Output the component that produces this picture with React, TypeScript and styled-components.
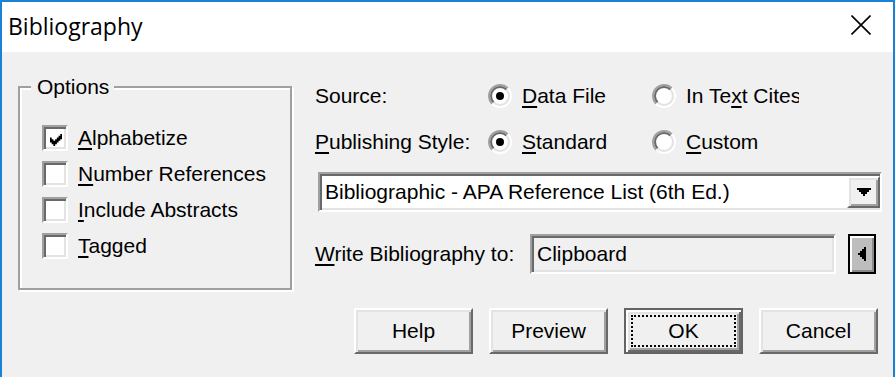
import React from "react";
import styled, { createGlobalStyle, css } from "styled-components";

const GlobalStyle = createGlobalStyle`
  html, body { margin: 0; padding: 0; background: #f0f0f0; }
  body { overflow: hidden; }
  * { box-sizing: border-box; }
`;

const sunken = css`
  border-style: solid;
  border-width: 2px;
  border-color: #a0a0a0 #ffffff #ffffff #a0a0a0;
  box-shadow: inset 2px 2px 0 #696969, inset -2px -2px 0 #e3e3e3;
`;

const raised = css`
  border-style: solid;
  border-width: 2px;
  border-color: #ffffff #696969 #696969 #ffffff;
  box-shadow: inset 2px 2px 0 #e3e3e3, inset -2px -2px 0 #a0a0a0;
`;

const Window = styled.div`
  width: 895px;
  height: 377px;
  border: 2px solid #1a82d6;
  border-bottom: none;
  background: #f0f0f0;
  display: flex;
  flex-direction: column;
  font-family: "Liberation Sans", Arial, sans-serif;
  font-size: 21px;
  color: #000;
`;

const TitleBar = styled.div`
  height: 50px;
  background: #ffffff;
  display: flex;
  align-items: center;
  justify-content: space-between;
  padding: 0 22px 0 6px;
  flex-shrink: 0;
`;

const Title = styled.div`
  font-family: "Open Sans", "Noto Sans", sans-serif;
  font-size: 23px;
  color: #000;
  line-height: 1;
  padding-bottom: 1px;
`;

const CloseIcon = styled.svg`
  width: 20px;
  height: 20px;
  display: block;
  margin-top: -4px;
`;

const Body = styled.div`
  flex: 1;
  display: flex;
  flex-direction: column;
`;

const TopArea = styled.div`
  display: flex;
  align-items: flex-start;
  padding-left: 16px;
`;

const GroupBox = styled.div`
  position: relative;
  margin-top: 34px;
  width: 274px;
  height: 204px;
  border: 2px solid #a0a0a0;
  box-shadow: inset 2px 2px 0 #ffffff, 2px 2px 0 #ffffff;
  padding: 37px 0 0 22px;
`;

const Legend = styled.div`
  position: absolute;
  top: -13px;
  left: 11px;
  padding: 0 5px 0 6px;
  line-height: 24px;
  background: #f0f0f0;
`;

const CheckList = styled.div`
  display: flex;
  flex-direction: column;
  gap: 10px;
`;

const CheckRow = styled.div`
  display: flex;
  align-items: center;
  height: 26px;
  gap: 10px;
  white-space: nowrap;
`;

const CheckBox = styled.div`
  width: 26px;
  height: 26px;
  background: #ffffff;
  ${sunken};
  padding: 4px;
  display: flex;
  flex-shrink: 0;
`;

const CheckMark = styled.svg`
  width: 14px;
  height: 14px;
  display: block;
  margin: 2px 0 0 2px;
`;

const Mn = styled.span`
  text-decoration: underline;
  text-decoration-thickness: 2px;
  text-underline-offset: 3px;
`;

const Label = styled.span`
  line-height: 26px;
`;

const RightPanel = styled.div`
  margin-left: 23px;
  width: 578px;
  display: flex;
  flex-direction: column;
`;

const Row = styled.div<{ $mt: number; $h?: number }>`
  display: flex;
  align-items: center;
  height: ${(p) => p.$h ?? 26}px;
  margin-top: ${(p) => p.$mt}px;
  white-space: nowrap;
`;

const FieldLabel = styled.div<{ $w: number }>`
  width: ${(p) => p.$w}px;
  flex-shrink: 0;
`;

const Option = styled.div<{ $w?: number }>`
  display: flex;
  align-items: center;
  gap: 10px;
  width: ${(p) => (p.$w ? `${p.$w}px` : "auto")};
  flex-shrink: 0;
`;

const OptionText = styled.div<{ $max?: number }>`
  max-width: ${(p) => (p.$max ? `${p.$max}px` : "none")};
  overflow: hidden;
  white-space: nowrap;
`;

const RadioSvg = styled.svg`
  width: 24px;
  height: 24px;
  display: block;
  flex-shrink: 0;
`;

const Combo = styled.div`
  margin-top: 17px;
  margin-left: 3px;
  width: 564px;
  height: 40px;
  background: #ffffff;
  ${sunken};
  padding: 2px;
  display: flex;
  align-items: center;
`;

const ComboText = styled.div`
  flex: 1;
  padding-left: 3px;
  white-space: nowrap;
  overflow: hidden;
`;

const DropButton = styled.div`
  width: 33px;
  height: 32px;
  margin-right: -2px;
  background: #f0f0f0;
  ${raised};
  display: flex;
  align-items: center;
  justify-content: center;
`;

const ArrowSvg = styled.svg<{ $w: number; $h: number }>`
  width: ${(p) => p.$w}px;
  height: ${(p) => p.$h}px;
  display: block;
`;

const TextField = styled.div`
  width: 306px;
  height: 40px;
  background: #f0f0f0;
  ${sunken};
  padding-left: 5px;
  display: flex;
  align-items: center;
`;

const SideButton = styled.div`
  margin-left: 12px;
  width: 28px;
  height: 40px;
  border: 2px solid #000000;
  background: #bdbdbd;
  box-shadow: inset 2px 2px 0 #ffffff, inset -2px -2px 0 #8a8a8a;
  display: flex;
  align-items: center;
  justify-content: center;
`;

const ButtonRow = styled.div`
  display: flex;
  justify-content: flex-end;
  gap: 16px;
  margin-top: 18px;
  padding-right: 15px;
`;

const Button = styled.div<{ $default?: boolean }>`
  position: relative;
  width: 119px;
  height: 46px;
  background: #f0f0f0;
  display: flex;
  align-items: center;
  justify-content: center;
  ${(p) =>
    p.$default
      ? css`
          border: 2px solid #646464;
          box-shadow: inset 2px 2px 0 #ffffff, inset -2px -2px 0 #696969,
            inset 4px 4px 0 #e3e3e3, inset -4px -4px 0 #a0a0a0;
        `
      : raised};
`;

const FocusRect = styled.div`
  position: absolute;
  inset: 5px;
  border: 2px dotted #000;
  pointer-events: none;
`;

const Radio: React.FC<{ checked?: boolean }> = ({ checked }) => {
  const arc = (r: number) => {
    const d = r * 0.7071;
    return {
      tl: `M ${12 - d} ${12 + d} A ${r} ${r} 0 0 1 ${12 + d} ${12 - d}`,
      br: `M ${12 + d} ${12 - d} A ${r} ${r} 0 0 1 ${12 - d} ${12 + d}`,
    };
  };
  const o = arc(11);
  const i = arc(9);
  return (
    <RadioSvg viewBox="0 0 24 24">
      <circle cx="12" cy="12" r="8" fill="#fff" />
      <path d={o.tl} stroke="#a0a0a0" strokeWidth="2" fill="none" />
      <path d={o.br} stroke="#ffffff" strokeWidth="2" fill="none" />
      <path d={i.tl} stroke="#696969" strokeWidth="2" fill="none" />
      <path d={i.br} stroke="#e3e3e3" strokeWidth="2" fill="none" />
      {checked && <circle cx="12" cy="12" r="4" fill="#000" />}
    </RadioSvg>
  );
};

const Check: React.FC<{ checked?: boolean; children: React.ReactNode }> = ({
  checked,
  children,
}) => (
  <CheckRow>
    <CheckBox>
      {checked && (
        <CheckMark viewBox="0 0 14 14">
          <path
            d="M0 4h2v6h-2z M2 6h2v6h-2z M4 8h2v6h-2z M6 6h2v6h-2z M8 4h2v6h-2z M10 2h2v6h-2z M12 0h2v6h-2z"
            fill="#000"
          />
        </CheckMark>
      )}
    </CheckBox>
    <Label>{children}</Label>
  </CheckRow>
);

export default function App() {
  return (
    <>
      <GlobalStyle />
      <Window>
        <TitleBar>
          <Title>Bibliography</Title>
          <CloseIcon viewBox="0 0 20 20">
            <path d="M0.5 0.5 L19.5 19.5 M19.5 0.5 L0.5 19.5" stroke="#000" strokeWidth="1.6" fill="none" />
          </CloseIcon>
        </TitleBar>
        <Body>
          <TopArea>
            <GroupBox>
              <Legend>Options</Legend>
              <CheckList>
                <Check checked>
                  <Mn>A</Mn>lphabetize
                </Check>
                <Check>
                  <Mn>N</Mn>umber References
                </Check>
                <Check>
                  <Mn>I</Mn>nclude Abstracts
                </Check>
                <Check>
                  <Mn>T</Mn>agged
                </Check>
              </CheckList>
            </GroupBox>
            <RightPanel>
              <Row $mt={31}>
                <FieldLabel $w={173}>Source:</FieldLabel>
                <Option $w={164}>
                  <Radio checked />
                  <OptionText>
                    <Mn>D</Mn>ata File
                  </OptionText>
                </Option>
                <Option>
                  <Radio />
                  <OptionText $max={113}>
                    In Te<Mn>x</Mn>t Cites
                  </OptionText>
                </Option>
              </Row>
              <Row $mt={20}>
                <FieldLabel $w={173}>
                  <Mn>P</Mn>ublishing Style:
                </FieldLabel>
                <Option $w={164}>
                  <Radio checked />
                  <OptionText>
                    <Mn>S</Mn>tandard
                  </OptionText>
                </Option>
                <Option>
                  <Radio />
                  <OptionText>
                    <Mn>C</Mn>ustom
                  </OptionText>
                </Option>
              </Row>
              <Combo>
                <ComboText>Bibliographic - APA Reference List (6th Ed.)</ComboText>
                <DropButton>
                  <ArrowSvg $w={14} $h={8} viewBox="0 0 14 8">
                    <path d="M0 0h14v2h-2v2h-2v2h-2v2h-2v-2h-2v-2h-2v-2h-2z" fill="#000" />
                  </ArrowSvg>
                </DropButton>
              </Combo>
              <Row $mt={21} $h={41}>
                <FieldLabel $w={215}>
                  <Mn>W</Mn>rite Bibliography to:
                </FieldLabel>
                <TextField>Clipboard</TextField>
                <SideButton>
                  <ArrowSvg $w={8} $h={14} viewBox="0 0 8 14">
                    <path d="M0 6h2v2h-2z M2 4h2v6h-2z M4 2h2v10h-2z M6 0h2v14h-2z" fill="#000" />
                  </ArrowSvg>
                </SideButton>
              </Row>
            </RightPanel>
          </TopArea>
          <ButtonRow>
            <Button>Help</Button>
            <Button>Preview</Button>
            <Button $default>
              OK
              <FocusRect />
            </Button>
            <Button>Cancel</Button>
          </ButtonRow>
        </Body>
      </Window>
    </>
  );
}
